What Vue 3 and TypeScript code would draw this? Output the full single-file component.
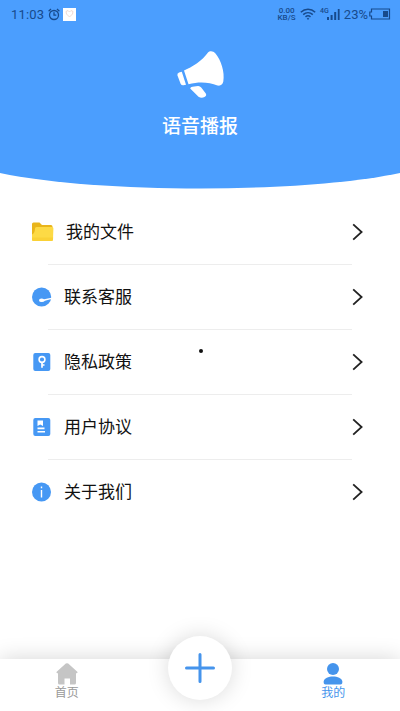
<script setup lang="ts">
interface MenuItem {
  id: 'files' | 'service' | 'privacy' | 'terms' | 'about'
  label: string
}

const items: MenuItem[] = [
  { id: 'files', label: '我的文件' },
  { id: 'service', label: '联系客服' },
  { id: 'privacy', label: '隐私政策' },
  { id: 'terms', label: '用户协议' },
  { id: 'about', label: '关于我们' },
]
</script>

<template>
  <div class="screen">
    <header class="hero">
      <svg class="hero-bg" viewBox="0 0 400 189" preserveAspectRatio="none">
        <path d="M0 0H400V173C350 183.500 275 188.500 200 188.500S50 183.500 0 173Z" fill="#4b9efe" />
      </svg>
      <div class="status">
        <div class="status-left">
          <span class="clock">11:03</span>
          <svg class="alarm" width="12" height="13" viewBox="0 0 12 13" fill="none" stroke="#174a8c" stroke-width="1.3">
            <circle cx="6" cy="7" r="4.500" />
            <path d="M6 4.300V7.200H8.300M.6 3.200 3 1M11.400 3.200 9 1" />
          </svg>
          <span class="app-badge">
            <svg width="13" height="13" viewBox="0 0 13 13" fill="none" stroke="#f0dad2" stroke-width="1">
              <path d="M3 3.500 5 2.500 6.500 4 8 2.500 10 3.500 9.500 6 6.500 9 3.500 6Z" />
            </svg>
          </span>
        </div>
        <div class="status-right">
          <span class="speed"><span>0.00</span><span>KB/S</span></span>
          <svg class="wifi" width="16" height="12" viewBox="0 0 16 12" fill="none" stroke="#174a8c" stroke-width="1.500">
            <path d="M.8 4.200C5 .2 11 .2 15.200 4.200M3.200 6.600C6 4 10 4 12.800 6.600M5.500 8.900C7 7.600 9 7.600 10.500 8.900" />
            <circle cx="8" cy="10.700" r=".6" fill="#174a8c" stroke-width=".8" />
          </svg>
          <span class="net">4G</span>
          <svg class="signal" width="13" height="11" viewBox="0 0 13 11" fill="#174a8c">
            <path d="M0 8H2V11H0ZM3.600 6H5.600V11H3.600ZM7.200 3H9.200V11H7.200ZM10.800 0H12.600V11H10.800Z" />
          </svg>
          <span class="percent">23%</span>
          <svg class="battery" width="22" height="12" viewBox="0 0 22 12">
            <path d="M2.500 1H20.500V11H2.500V8H.8V4H2.500Z" fill="none" stroke="#174a8c" stroke-width="1.200" />
            <path d="M14 3H19V9H14Z" fill="#174a8c" />
          </svg>
        </div>
      </div>
      <svg class="horn" width="50" height="52" viewBox="0 0 50 52" fill="#fff">
        <path d="M9 20.500C17 17 27 11 33 2.500C34.500.7 38 .4 40.500 3.500C46 10 50 22 48.300 31.500C47.700 34.500 45.500 36.200 42.500 35.500C34 32 24 31.500 13.500 34.200Z" />
        <path d="M6.800 21.700 11 34.700 8.500 35.300Q6.500 35.600 5.600 33.700L2.500 25.500Q1.800 23.300 4 22.500Z" />
        <path d="M15.200 38.500Q15.500 37 17.500 36.700L23 36Q25 35.900 26.200 37.500L30.800 43.500Q32 45.800 29.500 47Q26.500 48.400 23.500 46.800Z" />
      </svg>
      <h1 class="title">语音播报</h1>
    </header>

    <main class="menu">
      <div v-for="item in items" :key="item.id" class="row" :class="item.id">
        <svg v-if="item.id === 'files'" class="icon" width="22" height="20" viewBox="0 0 22 20">
          <path d="M0 2Q0 .5 1.500 .5H7.500L10 3H19Q20.500 3 20.500 4.500V14H0Z" fill="#e9b51b" />
          <path d="M3 6.500Q3 5 4.500 5H20Q21.500 5 21.400 6.500L21 17.500Q20.900 19 19.500 19H1.500Q0 19 0 17.500V12.500Q2.800 11.500 3 6.500Z" fill="#fdda45" />
          <path d="M0 15.500H21.100L21 17.500Q20.900 19 19.500 19H1.500Q0 19 0 17.500Z" fill="#fad136" />
        </svg>
        <svg v-else-if="item.id === 'service'" class="icon" width="20" height="20" viewBox="0 0 20 20">
          <circle cx="9.600" cy="10" r="9.600" fill="#4698f4" />
          <path d="M7 13.200Q7 11.400 9.500 11.400Q11 11.400 12 12.200L19.500 10.800V12L13 13.800Q11.500 15.200 9.700 15.100Q7 15 7 13.200Z" fill="#fff" />
        </svg>
        <svg v-else-if="item.id === 'privacy'" class="icon" width="20" height="20" viewBox="0 0 20 20">
          <rect x="1.300" y="1" width="17" height="18" rx="2" fill="#4698f4" />
          <circle cx="10" cy="7.500" r="2.900" fill="none" stroke="#fff" stroke-width="1.600" />
          <path d="M10 10V15.800M10 13H12.500" fill="none" stroke="#fff" stroke-width="1.700" />
        </svg>
        <svg v-else-if="item.id === 'terms'" class="icon" width="20" height="20" viewBox="0 0 20 20">
          <rect x="1.300" y="1" width="17" height="18" rx="2" fill="#4698f4" />
          <path d="M5.500 3.500H11V9L8.250 7.500 5.500 9ZM5.500 10.600H12.500V12.200H5.500ZM5.500 14H13V15.600H5.500Z" fill="#fff" />
        </svg>
        <svg v-else class="icon" width="20" height="20" viewBox="0 0 20 20">
          <circle cx="9.500" cy="10" r="9.500" fill="#4698f4" />
          <path d="M8.800 4.600H10.200V6.200H8.800ZM8.800 8H10.200V15.500H8.800Z" fill="#fff" />
        </svg>
        <span class="label">{{ item.label }}</span>
        <svg class="chevron" width="12" height="18" viewBox="0 0 12 18" fill="none" stroke="#222" stroke-width="1.800">
          <path d="M1.200 1.300 9.600 9 1.200 16.700" />
        </svg>
      </div>
      <i class="dot"></i>
    </main>

    <nav class="tabs">
      <div class="tab">
        <svg width="22" height="22" viewBox="0 0 22 22">
          <path d="M9.800 .6Q11 -.3 12.200 .6L21.300 8.800Q22 10 20.500 10.300H20V20Q20 21.500 18.500 21.500H14V15.500H8.500V21.500H3.500Q2 21.500 2 20V10.300H1.500Q0 10 .7 8.800Z" fill="#c5c5c5" />
        </svg>
        <span>首页</span>
      </div>
      <div class="center">
        <div class="add">
          <svg width="32" height="32" viewBox="0 0 32 32" stroke="#4594ec" stroke-width="3" stroke-linecap="round">
            <path d="M16 2.500V29.500M2.500 16H29.500" />
          </svg>
        </div>
      </div>
      <div class="tab active">
        <svg width="20" height="22" viewBox="0 0 20 22" fill="#4594ec">
          <circle cx="10" cy="6" r="6" />
          <path d="M.7 18.500C1.500 11.800 18.500 11.800 19.300 18.500Q19.600 21.500 17.500 21.500H2.500Q.4 21.500 .7 18.500Z" />
        </svg>
        <span>我的</span>
      </div>
    </nav>
  </div>
</template>

<style>
body {
  margin: 0;
  background: #fff;
}
</style>

<style scoped>
.screen {
  display: flex;
  flex-direction: column;
  width: 400px;
  height: 711px;
  overflow: hidden;
  background: #fff;
  font-family: Roboto, "Noto Sans CJK SC", sans-serif;
}
.hero {
  position: relative;
  display: flex;
  flex-direction: column;
  align-items: center;
  height: 189px;
  flex: none;
}
.hero-bg {
  position: absolute;
  inset: 0;
  width: 100%;
  height: 100%;
}
.status {
  position: relative;
  display: flex;
  justify-content: space-between;
  box-sizing: border-box;
  width: 100%;
  height: 28px;
  padding: 0 9px 0 11px;
  color: #174a8c;
}
.status-left,
.status-right {
  display: flex;
  align-items: center;
}
.clock {
  font-size: 13px;
  letter-spacing: 0.15px;
  line-height: 30px;
  padding-top: 2px;
}
.alarm {
  margin-left: 4px;
}
.app-badge {
  display: flex;
  width: 13px;
  height: 13px;
  margin-left: 3px;
  background: #fff;
}
.speed {
  display: flex;
  flex-direction: column;
  align-items: center;
  width: 19px;
  font-size: 8px;
  font-weight: 500;
  line-height: 7.5px;
}
.wifi {
  margin-left: 4px;
}
.net {
  margin: -6px 0 0 4px;
  font-size: 7px;
  font-weight: 500;
  line-height: 7px;
}
.signal {
  margin-left: -2px;
}
.percent {
  margin-left: 4px;
  font-size: 13px;
  line-height: 30px;
  padding-top: 2px;
}
.battery {
  margin-left: 1px;
}
.horn {
  margin: 22px 1px 0 0;
  z-index: 1;
}
.title {
  z-index: 1;
  margin: 11px 0 0;
  color: #fff;
  font-size: 19px;
  font-weight: 500;
  line-height: 28px;
}
.menu {
  position: relative;
  display: flex;
  flex-direction: column;
  flex: 1;
  padding-top: 10px;
}
.row {
  position: relative;
  display: flex;
  align-items: center;
  height: 65.2px;
  padding: 0 36px 0 32px;
}
.row:not(:nth-child(5))::after {
  position: absolute;
  right: 48px;
  bottom: -0.4px;
  left: 48px;
  height: 1px;
  background: #ededed;
  content: "";
}
.icon {
  flex: none;
}
.label {
  flex: 1;
  margin-left: 12px;
  color: #111;
  font-size: 17px;
  line-height: 24px;
}
.chevron {
  flex: none;
}
.dot {
  position: absolute;
  top: 160px;
  left: 199px;
  width: 4px;
  height: 4px;
  border-radius: 50%;
  background: #111;
}
.tabs {
  position: relative;
  display: flex;
  flex: none;
  height: 52px;
  background: #fff;
  box-shadow: 0 0 22px rgba(0, 0, 0, 0.17);
}
.tab {
  display: flex;
  flex: 1;
  flex-direction: column;
  align-items: center;
  padding-top: 4px;
  color: #999;
  font-size: 12px;
  line-height: 17px;
}
.tab.active {
  color: #4594ec;
}
.center {
  display: flex;
  flex: 1;
  justify-content: center;
}
.add {
  display: flex;
  flex: none;
  align-items: center;
  justify-content: center;
  width: 64px;
  height: 64px;
  margin-top: -23px;
  border-radius: 50%;
  background: #fff;
  box-shadow: 0 0 22px rgba(0, 0, 0, 0.15);
}
</style>
